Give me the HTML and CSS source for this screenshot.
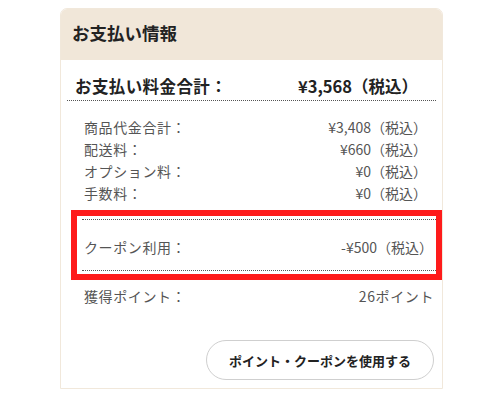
FILE: index.html
```html
<!DOCTYPE html>
<html lang="ja">
<head>
<meta charset="utf-8">
<link rel="stylesheet" href="styles.css">
</head>
<body>
<div class="card">
  <div class="card-head">お支払い情報</div>
  <div class="card-body">
    <div class="total">
      <span class="total-label">お支払い料金合計：</span>
      <span>¥3,568（税込）</span>
    </div>
    <div class="details">
      <div class="row"><span class="label">商品代金合計：</span><span>¥3,408（税込）</span></div>
      <div class="row"><span class="label">配送料：</span><span>¥660（税込）</span></div>
      <div class="row"><span class="label">オプション料：</span><span>¥0（税込）</span></div>
      <div class="row"><span class="label">手数料：</span><span>¥0（税込）</span></div>
    </div>
    <div class="coupon-box">
      <div class="coupon">
        <div class="row"><span class="label">クーポン利用：</span><span>-¥500（税込）</span></div>
      </div>
    </div>
    <div class="row points"><span class="label">獲得ポイント：</span><span class="pts">26ポイント</span></div>
    <div class="actions">
      <button class="btn">ポイント・クーポンを使用する</button>
    </div>
  </div>
</div>
</body>
</html>
```
FILE: styles.css
```css
* { box-sizing: border-box; }
html, body { margin: 0; padding: 0; background: #fff; }
body {
  font-family: "Noto Sans CJK JP", "Noto Sans", sans-serif;
  color: #222;
}
.card {
  margin: 8px 0 0 60px;
  width: 383px;
  height: 381px;
  border: 1px solid #f1e8db;
  border-radius: 7px 7px 0 0;
  overflow: hidden;
}
.card-head {
  background: #f1e7d9;
  height: 51px;
  padding: 0 0 4px 11px;
  display: flex;
  align-items: center;
  font-size: 17.5px;
  font-weight: bold;
  color: #222;
}
.card-body {
  padding: 12px 6px 0 6px;
}
.total {
  display: flex;
  justify-content: space-between;
  align-items: center;
  font-size: 16.5px;
  font-weight: bold;
  height: 29px;
  padding: 0 18px 0 8px;
  border-bottom: 1px dotted #555;
}
.total-label { letter-spacing: 0.4px; }
.details {
  padding: 15px 0 0 0;
}
.row {
  display: flex;
  justify-content: space-between;
  align-items: center;
  height: 22px;
  font-size: 14px;
  color: #555;
  padding: 0 9px 0 17px;
}
.label { letter-spacing: 0.6px; }
.pts { letter-spacing: 0.6px; margin-right: -1px; }
.coupon-box {
  margin: 6px -6px 0 4px;
  border: 6px solid #fe1b1b;
  padding: 3px 0 0 5px;
  height: 70px;
}
.coupon {
  border-top: 1px dotted #555;
  border-bottom: 1px dotted #555;
  height: 52px;
  display: flex;
  flex-direction: column;
  justify-content: center;
  padding-top: 3px;
}
.coupon .row {
  padding: 0 3px 0 2px;
}
.points {
  margin-top: 5px;
  padding-right: 3px;
  height: 22px;
}
.actions {
  display: flex;
  justify-content: flex-end;
  padding: 33px 2px 0 0;
}
.btn {
  width: 228px;
  height: 40px;
  border: 1px solid #cfcfcf;
  border-radius: 20px;
  background: #fff;
  font-family: "Noto Sans CJK JP", "Noto Sans", sans-serif;
  font-size: 13px;
  font-weight: bold;
  color: #222;
}
```
